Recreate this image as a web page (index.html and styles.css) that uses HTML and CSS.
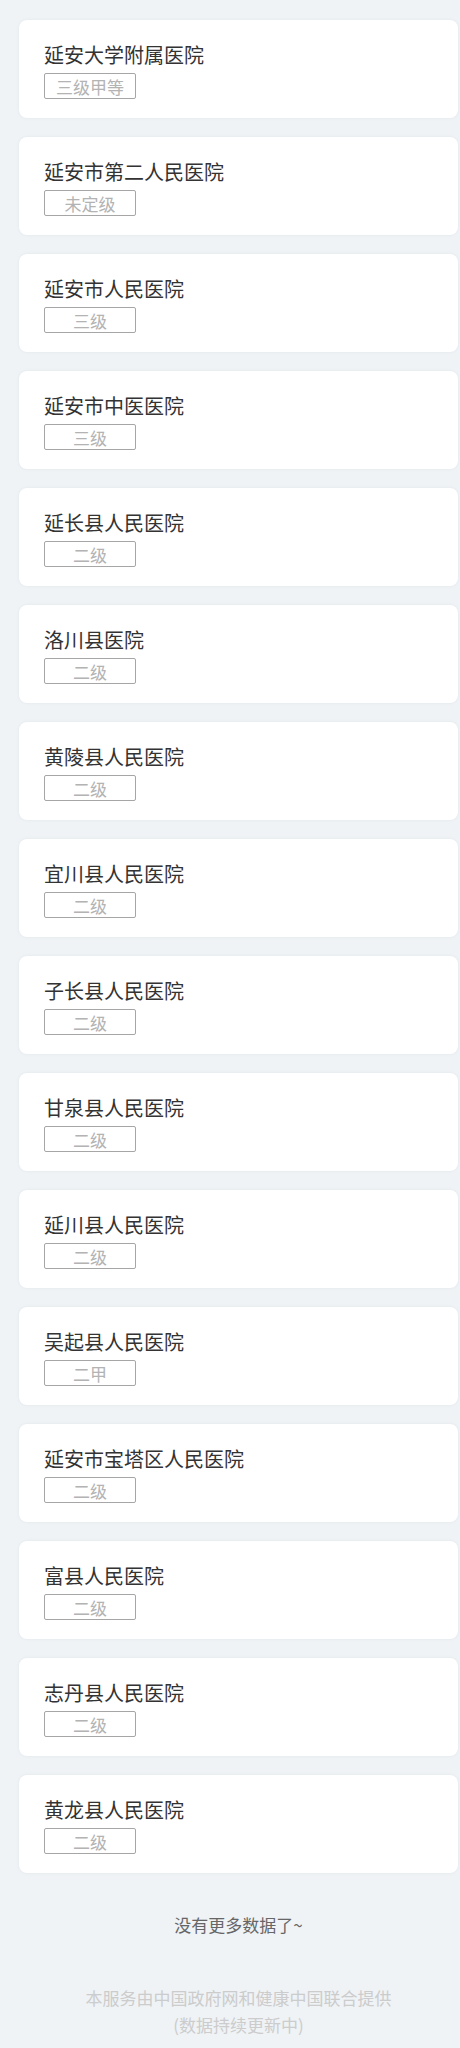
FILE: index.html
```html
<!DOCTYPE html>
<html lang="zh-CN">
<head>
<meta charset="utf-8">
<title>医院列表</title>
<link rel="stylesheet" href="styles.css">
</head>
<body>
<div class="page">
  <ul class="list">
    <li class="card"><div class="name">延安大学附属医院</div><span class="tag">三级甲等</span></li>
    <li class="card"><div class="name">延安市第二人民医院</div><span class="tag">未定级</span></li>
    <li class="card"><div class="name">延安市人民医院</div><span class="tag">三级</span></li>
    <li class="card"><div class="name">延安市中医医院</div><span class="tag">三级</span></li>
    <li class="card"><div class="name">延长县人民医院</div><span class="tag">二级</span></li>
    <li class="card"><div class="name">洛川县医院</div><span class="tag">二级</span></li>
    <li class="card"><div class="name">黄陵县人民医院</div><span class="tag">二级</span></li>
    <li class="card"><div class="name">宜川县人民医院</div><span class="tag">二级</span></li>
    <li class="card"><div class="name">子长县人民医院</div><span class="tag">二级</span></li>
    <li class="card"><div class="name">甘泉县人民医院</div><span class="tag">二级</span></li>
    <li class="card"><div class="name">延川县人民医院</div><span class="tag">二级</span></li>
    <li class="card"><div class="name">吴起县人民医院</div><span class="tag">二甲</span></li>
    <li class="card"><div class="name">延安市宝塔区人民医院</div><span class="tag">二级</span></li>
    <li class="card"><div class="name">富县人民医院</div><span class="tag">二级</span></li>
    <li class="card"><div class="name">志丹县人民医院</div><span class="tag">二级</span></li>
    <li class="card"><div class="name">黄龙县人民医院</div><span class="tag">二级</span></li>
  </ul>
  <p class="nomore">没有更多数据了~</p>
  <p class="footer">本服务由中国政府网和健康中国联合提供<br>(数据持续更新中)</p>
</div>
</body>
</html>
```
FILE: styles.css
```css
html, body {
  margin: 0;
  padding: 0;
  background: #eff3f6;
}
body {
  font-family: "Microsoft YaHei", "Noto Sans CJK SC", "Noto Sans", sans-serif;
  color: #333;
}
.page {
  padding: 20px 2px 10px 19px;
}
.list {
  list-style: none;
  margin: 0;
  padding: 0;
  display: flex;
  flex-direction: column;
  gap: 19px;
}
.card {
  background: #fff;
  border-radius: 8px;
  box-shadow: 0 0 3px rgba(120, 140, 160, 0.12);
  padding: 22px 25px 19px;
  height: 98px;
  box-sizing: border-box;
}
.name {
  font-size: 20px;
  line-height: 26px;
  height: 26px;
  color: #333;
  margin-bottom: 5px;
  white-space: nowrap;
}
.tag {
  display: flex;
  align-items: center;
  justify-content: center;
  width: 92px;
  height: 26px;
  box-sizing: border-box;
  border: 1px solid #a6a6a6;
  border-radius: 2px;
  font-size: 17px;
  color: #b3b3b3;
}
.nomore {
  margin: 40px 0 0;
  text-align: center;
  font-size: 17px;
  line-height: 24px;
  color: #666;
}
.footer {
  margin: 47px 0 0;
  text-align: center;
  font-size: 17px;
  line-height: 27px;
  color: #cccccc;
}
```
